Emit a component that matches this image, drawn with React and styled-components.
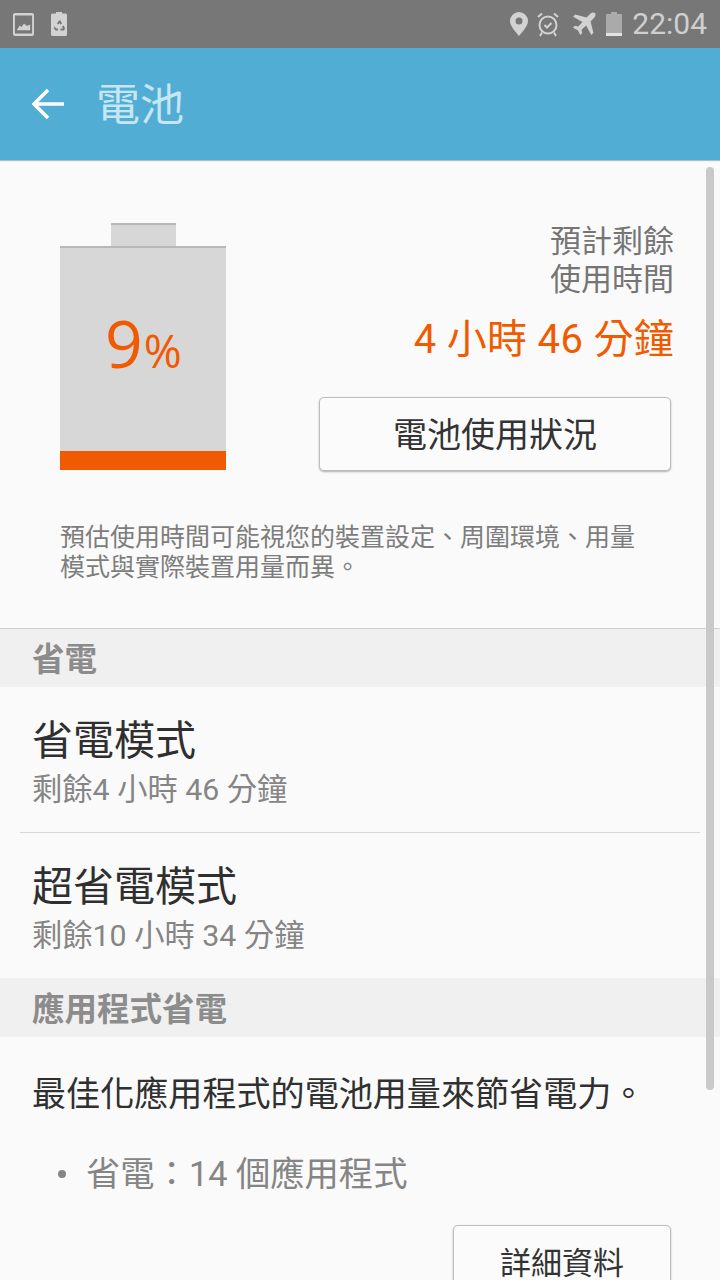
import React from "react";
import styled, { createGlobalStyle } from "styled-components";

const Global = createGlobalStyle`
  html, body { margin: 0; padding: 0; background: #fafafa; }
  * { box-sizing: border-box; }
`;
const FONT = `Roboto, "Noto Sans CJK TC", sans-serif`;

const Screen = styled.div`
  position: relative; width: 720px; height: 1280px; overflow: hidden;
  background: #fafafa; font-family: ${FONT};
`;
const StatusBar = styled.div`
  height: 48px; background: #777777; display: flex; align-items: center;
  justify-content: space-between; padding: 0 13px 0 13px; color: #d2d2d2;
`;
const StatusGroup = styled.div`display: flex; align-items: center; gap: ${p => p.$gap}px;`;
const Clock = styled.span`font-size: 30px; line-height: 48px; color: #cfcfcf; margin-left: 10px;`;
const AppBar = styled.header`
  height: 112px; background: #52add5; display: flex; align-items: center;
  padding-left: 32px; box-shadow: 0 1px 1px rgba(0,0,0,.25); position: relative;
`;
const Title = styled.h1`
  margin: 4px 0 0 32px; font-size: 44px; font-weight: 400; color: #c6e6f3; line-height: 108px;
`;
const Summary = styled.section`
  padding: 63px 46px 0 60px; height: 469px; border-bottom: 1px solid #d0d0d0;
`;
const SummaryTop = styled.div`display: flex; justify-content: space-between;`;
const Battery = styled.div`width: 166px; display: flex; flex-direction: column; align-items: center;`;
const Nub = styled.div`
  width: 65px; height: 23px; background: #d7d7d7; border-top: 2px solid #b8b8b8;
`;
const Cell = styled.div`
  width: 100%; height: 224px; background: #d7d7d7; border-top: 2px solid #b8b8b8;
  display: flex; flex-direction: column;
`;
const Level = styled.div`
  flex: 1; display: flex; align-items: baseline; justify-content: center;
  padding: 50px 0 0 1px; color: #f05a00; font-family: "Open Sans", sans-serif;
`;
const Nine = styled.span`font-size: 66px; line-height: 88px; font-weight: 400;`;
const Percent = styled.span`font-size: 46px; line-height: 88px; font-weight: 400; margin-left: 1px;`;
const Fill = styled.div`height: 19px; background: #f05a00;`;
const Info = styled.div`
  width: 354px; display: flex; flex-direction: column; align-items: flex-end;
`;
const Estimate = styled.div`
  font-size: 31px; line-height: 38px; color: #757575; text-align: right;
`;
const Remaining = styled.div`
  font-size: 40px; line-height: 48px; color: #f05a00; margin-top: 17px; letter-spacing: .3px;
`;
const OutlineButton = styled.button`
  display: flex; align-items: center; justify-content: center; padding: 0 0 3px;
  width: ${p => p.$w}px; height: 74px; background: #fbfbfb; border: 1px solid #bdbdbd;
  border-radius: 5px; box-shadow: 0 1px 2px rgba(0,0,0,.3); color: #333;
  font-family: ${FONT}; font-size: ${p => p.$size}px;
`;
const PrimaryAction = styled(OutlineButton)`margin: 33px 3px 0 0;`;
const Note = styled.p`
  margin: 52px 0 0; font-size: 25px; line-height: 30px; color: #7d7d7d; width: 590px;
`;
const SectionHead = styled.div`
  height: ${p => p.$h}px; background: #f0f0f0; padding: 0 0 3px 32px; display: flex; align-items: center;
  font-size: 32.5px; font-weight: 700; color: #8c8c8c;
`;
const Row = styled.div`
  padding: 4px 32px 0; height: ${p => p.$h}px; display: flex; flex-direction: column; justify-content: center;
`;
const RowTitle = styled.div`font-size: 41px; line-height: 54px; color: #2f2f2f;`;
const RowSub = styled.div`font-size: 30.3px; line-height: 40px; color: #858585; margin-top: 2px;`;
const Divider = styled.div`height: 1px; background: #d6d6d6; margin: 0 20px;`;
const Body = styled.div`padding: 35px 0 0 32px; font-size: 34.1px; line-height: 44px; color: #303030; white-space: nowrap;`;
const Bullet = styled.div`
  display: flex; align-items: center; margin-top: 36px; padding-left: 58px;
  font-size: 34.3px; line-height: 44px; color: #858585;
  &::before { content: ""; width: 8px; height: 8px; border-radius: 50%; background: #858585; margin-right: 20px; }
`;
const Footer = styled.div`display: flex; justify-content: flex-end; padding: 29px 49px 0 0;`;
const Scrollbar = styled.div`
  position: absolute; right: 6px; top: 167px; width: 8px; height: 923px; background: #c9c9c9; border-radius: 4px;
`;

const Glyph = styled.svg`display: block; fill: currentColor; flex: none; margin-left: ${p => p.$ml || 0}px;`;
const LineGlyph = styled.svg`display: block; fill: none; stroke: currentColor; stroke-width: 2px; flex: none; margin-left: ${p => p.$ml || 0}px;`;
const DimGlyph = styled(Glyph)`color: #aaaaaa;`;

export default function App() {
  return (
    <Screen>
      <Global />
      <StatusBar>
        <StatusGroup $gap={17}>
          <Glyph width="21" height="23" viewBox="0 0 22 24">
            <path fillRule="evenodd" d="M2 0h18a2 2 0 0 1 2 2v20a2 2 0 0 1-2 2H2a2 2 0 0 1-2-2V2a2 2 0 0 1 2-2zm0 2.500v19h18v-19zM4 18l3-5 2 1.500 2.500-3.500 3 2.500L18 12v6z" />
          </Glyph>
          <Glyph width="16" height="24" viewBox="0 0 16 24">
            <path fillRule="evenodd" d="M5 0h6v1.500h3.500a1.500 1.500 0 0 1 1.500 1.500v19.500a1.500 1.500 0 0 1-1.500 1.500h-13A1.500 1.500 0 0 1 0 22.500V3a1.500 1.500 0 0 1 1.500-1.500H5zM8 8.500 6 11.500l1.500 1L8.500 11l1 1.500 1.500-1-1.500-3zM3.500 14 3 16.500 4.500 18.500H7v-2H5zM12.800 13.500 11 14.500l1 2H9.500v2h3.500l1-2z" />
          </Glyph>
        </StatusGroup>
        <StatusGroup $gap={0}>
          <Glyph width="18" height="24" viewBox="0 0 18 24">
            <path fillRule="evenodd" d="M9 0a9 9 0 0 1 9 9c0 5.500-6 11-9 15C6 20 0 14.500 0 9a9 9 0 0 1 9-9zm0 5.500a3.500 3.500 0 1 0 0 7 3.500 3.500 0 0 0 0-7z" />
          </Glyph>
          <LineGlyph $ml={9} width="22" height="25" viewBox="0 0 22 25">
            <circle cx="11" cy="13" r="8.500" />
            <path d="M7.500 13l2.500 2.500 4.500-4.500M1 5l4-3.500M21 5l-4-3.500M5 20.500l-2 3.500M17 20.500l2 3.500" />
          </LineGlyph>
          <Glyph $ml={12} width="25" height="25" viewBox="0 0 24 24">
            <path d="M23 1c-1-1-3.200-.6-4.500.7L15 5.200 4 2.500 2 4.500l9 5-4 4.300-3.500-.5L2 15l4.500 2.500L9 22l1.700-1.500-.5-3.500 4.300-4 5 9 2-2-2.700-11 3.500-3.500C23.600 4.200 24 2 23 1z" />
          </Glyph>
          <DimGlyph $ml={10} width="16" height="24" viewBox="0 0 16 24">
            <path d="M5 0h6v2h4a1 1 0 0 1 1 1v18H0V3a1 1 0 0 1 1-1h4z" />
            <rect y="21" width="16" height="3" fill="#e2e2e2" />
          </DimGlyph>
          <Clock>22:04</Clock>
        </StatusGroup>
      </StatusBar>
      <AppBar>
        <svg width="32" height="32" viewBox="0 0 32 32" fill="none" stroke="#fff" strokeWidth="3.500">
          <path d="M32 16H3M16 2 2 16l14 14" />
        </svg>
        <Title>電池</Title>
      </AppBar>
      <Summary>
        <SummaryTop>
          <Battery>
            <Nub />
            <Cell>
              <Level><Nine>9</Nine><Percent>%</Percent></Level>
              <Fill />
            </Cell>
          </Battery>
          <Info>
            <Estimate>預計剩餘<br />使用時間</Estimate>
            <Remaining>4 小時 46 分鐘</Remaining>
            <PrimaryAction $w={352} $size={34}>電池使用狀況</PrimaryAction>
          </Info>
        </SummaryTop>
        <Note>預估使用時間可能視您的裝置設定、周圍環境、用量模式與實際裝置用量而異。</Note>
      </Summary>
      <SectionHead $h={58}>省電</SectionHead>
      <Row $h={145}>
        <RowTitle>省電模式</RowTitle>
        <RowSub>剩餘4 小時 46 分鐘</RowSub>
      </Row>
      <Divider />
      <Row $h={145}>
        <RowTitle>超省電模式</RowTitle>
        <RowSub>剩餘10 小時 34 分鐘</RowSub>
      </Row>
      <SectionHead $h={59}>應用程式省電</SectionHead>
      <Body>最佳化應用程式的電池用量來節省電力。</Body>
      <Bullet>省電：14 個應用程式</Bullet>
      <Footer><OutlineButton $w={218} $size={31}>詳細資料</OutlineButton></Footer>
      <Scrollbar />
    </Screen>
  );
}
